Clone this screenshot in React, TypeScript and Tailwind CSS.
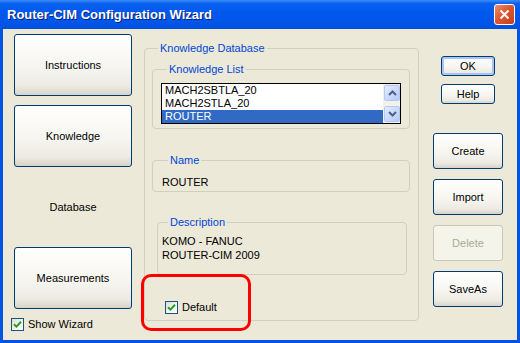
import React from "react";

const btn =
  "flex items-center justify-center rounded-[3px] border border-[#003c74] bg-[linear-gradient(180deg,#ffffff_0%,#f6f5f0_55%,#eceae2_85%,#d8d3c7_100%)] text-[11px] text-black";

function Check() {
  return (
    <span className="flex h-[13px] w-[13px] shrink-0 items-center justify-center border border-[#1c5180] bg-[linear-gradient(135deg,#dcdcd6_0%,#f4f4f0_55%,#ffffff_100%)]">
      <svg width="9" height="9" viewBox="0 0 9 9">
        <path d="M1 4.2 L3.4 6.6 L8 1.8" fill="none" stroke="#21a121" strokeWidth="2" />
      </svg>
    </span>
  );
}

function ScrollBtn({ up }: { up?: boolean }) {
  return (
    <div className="flex h-[16px] w-[16px] items-center justify-center rounded-[2px] border border-[#b4c8f6] bg-[linear-gradient(135deg,#e4ecfe_0%,#c7d6fb_60%,#b5c9f7_100%)]">
      <svg width="9" height="6" viewBox="0 0 9 6">
        <path d={up ? "M1 5 L4.5 1.5 L8 5" : "M1 1 L4.5 4.5 L8 1"} fill="none" stroke="#4d6185" strokeWidth="2" />
      </svg>
    </div>
  );
}

function Group({ title, className, children }: { title: string; className?: string; children: React.ReactNode }) {
  return (
    <fieldset className={`rounded-[4px] border border-[#d0d0bf] ${className ?? ""}`}>
      <legend className="ml-[6px] px-[2px] text-[11px] leading-[12px] text-[#0046d5]">{title}</legend>
      {children}
    </fieldset>
  );
}

export default function App() {
  return (
    <div className="relative flex h-[343px] w-[520px] flex-col bg-[#0553e4] font-['Liberation_Sans',Arial,sans-serif]">
      {/* title bar */}
      <div className="flex h-[29px] items-center justify-between bg-[linear-gradient(180deg,#3b8cf7_0%,#0a62f0_12%,#0058ee_40%,#0056e9_75%,#0050dc_100%)] pl-[7px] pr-[5px]">
        <span className="text-[13px] font-bold text-white [text-shadow:1px_1px_0_#0a1e78]">
          Router-CIM Configuration Wizard
        </span>
        <div className="flex h-[21px] w-[21px] items-center justify-center rounded-[3px] border border-white bg-[linear-gradient(135deg,#e9906f_0%,#e0572f_45%,#c5401c_100%)]">
          <svg width="11" height="11" viewBox="0 0 11 11">
            <path d="M1.5 1.5 L9.5 9.5 M9.5 1.5 L1.5 9.5" stroke="white" strokeWidth="2" />
          </svg>
        </div>
      </div>

      {/* body */}
      <div className="mx-[3px] mb-[3px] flex flex-1 items-start bg-[#ece9d8] text-[11px] text-black">
        {/* left column */}
        <div className="flex w-[129px] shrink-0 flex-col pl-[8px] pt-[5px]">
          <div className={`${btn} ml-[3px] h-[62px] w-[118px]`}>Instructions</div>
          <div className={`${btn} ml-[3px] mt-[9px] h-[62px] w-[118px]`}>Knowledge</div>
          <div className="ml-[3px] flex h-[80px] w-[118px] items-center justify-center">Database</div>
          <div className={`${btn} ml-[3px] h-[62px] w-[118px]`}>Measurements</div>
          <div className="mt-[9px] flex items-center gap-[4px] leading-[13px]">
            <Check />
            <span>Show Wizard</span>
          </div>
        </div>

        {/* middle group */}
        <Group title="Knowledge Database" className="ml-[12px] mt-[13px] w-[275px] shrink-0 px-[7px] pb-[6px]">
          <Group title="Knowledge List" className="mt-[9px] mr-[1px] px-[8px] pb-[4px]">
            <div className="mt-[8px] flex h-[41px] w-[240px] border border-black bg-white">
              <div className="flex flex-1 flex-col leading-[13px]">
                <div className="h-[13px] pl-[3px]">MACH2SBTLA_20</div>
                <div className="h-[13px] pl-[3px]">MACH2STLA_20</div>
                <div className="h-[13px] bg-[#316ac5] pl-[3px] text-white">ROUTER</div>
              </div>
              <div className="flex w-[17px] flex-col justify-between bg-[#f3f1ec] py-[1px] pl-[1px]">
                <ScrollBtn up />
                <ScrollBtn />
              </div>
            </div>
          </Group>

          <Group title="Name" className="mt-[25px] mr-[1px] px-[9px] pb-[2px]">
            <div className="mt-[10px] leading-[13px]">ROUTER</div>
          </Group>

          <Group title="Description" className="mt-[24px] ml-[5px] mr-[4px] px-[4px] pb-[12px]">
            <div className="mt-[6px] leading-[14px]">
              <div>KOMO - FANUC</div>
              <div>ROUTER-CIM 2009</div>
            </div>
          </Group>

          <div className="ml-[13px] mt-[26px] flex items-center gap-[4px] leading-[13px]">
            <Check />
            <span>Default</span>
          </div>
        </Group>

        {/* right column */}
        <div className="ml-[14px] mt-[27px] flex w-[70px] shrink-0 flex-col items-center">
          <div className={`${btn} h-[20px] w-[54px] shadow-[inset_0_0_0_2px_#a9c4f5]`}>OK</div>
          <div className={`${btn} mt-[8px] h-[20px] w-[54px]`}>Help</div>
          <div className={`${btn} mt-[29px] h-[36px] w-[70px]`}>Create</div>
          <div className={`${btn} mt-[10px] h-[36px] w-[70px]`}>Import</div>
          <div className="mt-[10px] flex h-[36px] w-[70px] items-center justify-center rounded-[3px] border border-[#c9c7ba] bg-[#f5f4ea] text-[#aca899]">
            Delete
          </div>
          <div className={`${btn} mt-[10px] h-[36px] w-[70px]`}>SaveAs</div>
        </div>
      </div>

      {/* red highlight annotation */}
      <div className="absolute left-[141px] top-[274px] h-[57px] w-[110px] rounded-[10px] border-[3px] border-[#ff0000]" />
    </div>
  );
}
